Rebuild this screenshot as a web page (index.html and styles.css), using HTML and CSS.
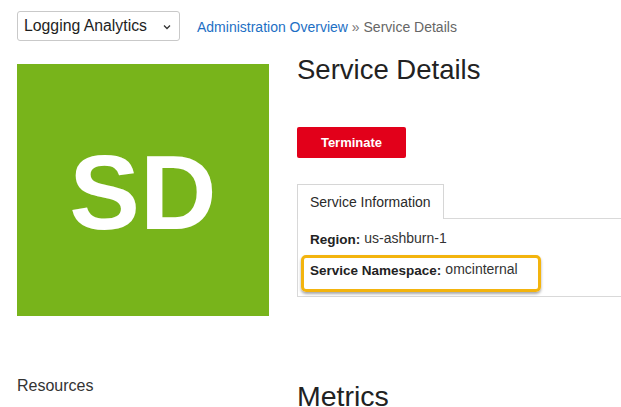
FILE: index.html
```html
<!DOCTYPE html>
<html lang="en">
<head>
<meta charset="utf-8">
<title>Service Details</title>
<link rel="stylesheet" href="styles.css">
</head>
<body>
<div class="page">
  <div class="topbar">
    <div class="select">
      <span class="select-label">Logging Analytics</span>
      <svg class="chev" width="8" height="6" viewBox="0 0 8 6"><polyline points="1,1.5 4,4.5 7,1.5" fill="none" stroke="#333" stroke-width="1.3"/></svg>
    </div>
    <div class="crumbs"><a class="crumb-link">Administration Overview</a> <span class="crumb-sep">»</span> Service Details</div>
  </div>
  <div class="main">
    <div class="left">
      <div class="avatar"><span>SD</span></div>
      <div class="resources">Resources</div>
    </div>
    <div class="right">
      <h1 class="title">Service Details</h1>
      <button class="terminate">Terminate</button>
      <div class="tabs">
        <div class="tab">Service Information</div>
      </div>
      <div class="panel">
        <div class="row"><span class="label">Region:</span><span class="value">us-ashburn-1</span></div>
        <div class="row highlight"><span class="label">Service Namespace:</span><span class="value">omcinternal</span></div>
      </div>
      <h2 class="metrics">Metrics</h2>
    </div>
  </div>
</div>
</body>
</html>
```

FILE: styles.css
```css
html, body {
  margin: 0;
  padding: 0;
  background: #fff;
  overflow: hidden;
}
body {
  font-family: "Liberation Sans", Arial, sans-serif;
  color: #222;
}
.page {
  width: 621px;
  padding: 11px 0 0 17px;
  box-sizing: border-box;
}
.topbar {
  display: flex;
  align-items: center;
  gap: 17px;
}
.select {
  box-sizing: border-box;
  width: 163px;
  height: 30px;
  border: 1px solid #c9c9c9;
  border-radius: 3px;
  display: flex;
  align-items: center;
  justify-content: space-between;
  padding: 0 8px 0 6px;
}
.select-label {
  font-size: 15.8px;
  color: #1e1e1e;
}
.chev {
  display: block;
  margin-top: 1px;
}
.crumbs {
  font-size: 14px;
  color: #666;
  padding-top: 2px;
}
.crumb-link {
  color: #1d6fc4;
  text-decoration: none;
}
.crumb-sep {
  color: #777;
}
.main {
  display: flex;
  align-items: flex-start;
  gap: 28px;
  margin-top: 13px;
}
.left {
  width: 252px;
  flex: none;
}
.avatar {
  margin-top: 10px;
  width: 252px;
  height: 252px;
  background: #78b41b;
  display: flex;
  align-items: center;
  justify-content: center;
  box-sizing: border-box;
  padding-top: 4px;
}
.avatar span {
  color: #fff;
  font-weight: bold;
  font-size: 106px;
  line-height: 1;
}
.resources {
  margin-top: 60px;
  font-size: 16px;
  line-height: 20px;
  color: #333;
}
.right {
  flex: 1;
  min-width: 0;
}
.title {
  margin: 0;
  font-size: 27.5px;
  line-height: 32px;
  font-weight: normal;
  color: #222;
}
.terminate {
  display: block;
  margin-top: 41px;
  width: 109px;
  height: 31px;
  border: none;
  border-radius: 2px;
  background: #e2001a;
  color: #fff;
  font-family: "Liberation Sans", Arial, sans-serif;
  font-weight: bold;
  font-size: 13px;
  padding: 0;
}
.tabs {
  display: flex;
  margin-top: 26px;
}
.tab {
  position: relative;
  box-sizing: border-box;
  width: 147px;
  height: 35px;
  margin-bottom: -1px;
  border: 1px solid #d6d6d6;
  border-bottom: none;
  background: #fff;
  padding-left: 12px;
  display: flex;
  align-items: center;
  font-size: 14px;
  color: #2a2a2a;
}
.panel {
  border: 1px solid #d9d9d9;
  border-right: none;
  padding: 11px 0 4px 12px;
}
.row {
  display: flex;
  align-items: flex-start;
  gap: 4px;
  height: 20px;
  color: #222;
}
.label {
  font-weight: bold;
  font-size: 13.5px;
  line-height: 20px;
}
.value {
  font-size: 14px;
  line-height: 16px;
  color: #333;
}
.highlight {
  box-sizing: content-box;
  width: 228px;
  margin: 5px 0 0 -9px;
  border: 3px solid #f3b40e;
  border-radius: 5px;
  padding: 3px 0 8px 6px;
  box-shadow: 0 2px 3px rgba(0, 0, 0, 0.35);
}
.metrics {
  margin: 83px 0 0;
  font-size: 28.5px;
  line-height: 32px;
  font-weight: normal;
  color: #222;
}
```
